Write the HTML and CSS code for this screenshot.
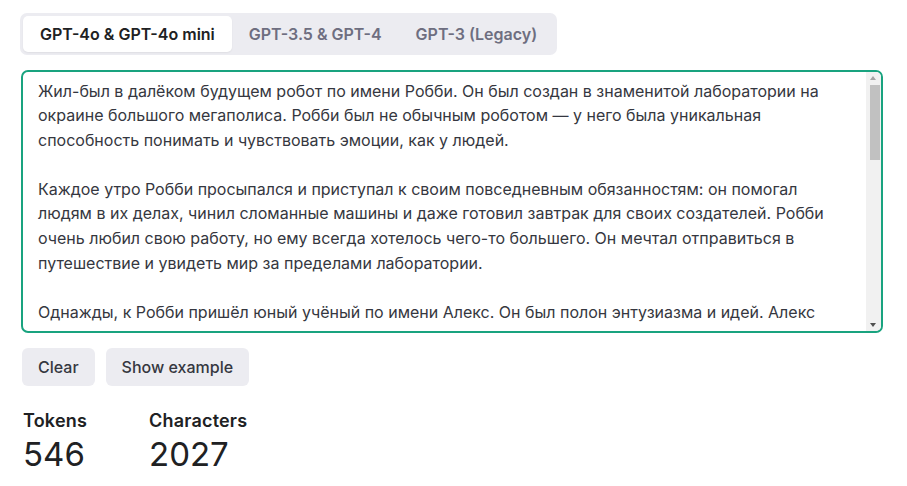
FILE: index.html
```html
<!DOCTYPE html>
<html lang="ru">
<head>
<meta charset="utf-8">
<title>Tokenizer</title>
<link rel="stylesheet" href="styles.css">
</head>
<body>
<main class="page">
  <div class="tabs">
    <button class="tab tab-active">GPT-4o &amp; GPT-4o mini</button>
    <button class="tab">GPT-3.5 &amp; GPT-4</button>
    <button class="tab">GPT-3 (Legacy)</button>
  </div>

  <div class="editor">
    <div class="editor-text">
      <p>Жил-был в далёком будущем робот по имени Робби. Он был создан в знаменитой лаборатории на окраине большого мегаполиса. Робби был не обычным роботом — у него была уникальная способность понимать и чувствовать эмоции, как у людей.</p>
      <p>Каждое утро Робби просыпался и приступал к своим повседневным обязанностям: он помогал людям в их делах, чинил сломанные машины и даже готовил завтрак для своих создателей. Робби очень любил свою работу, но ему всегда хотелось чего-то большего. Он мечтал отправиться в путешествие и увидеть мир за пределами лаборатории.</p>
      <p>Однажды, к Робби пришёл юный учёный по имени Алекс. Он был полон энтузиазма и идей. Алекс предложил Робби отправиться вместе с ним в экспедицию к далёким горам, где, по слухам, скрывалась древняя тайна. Робби не раздумывая согласился.</p>
      <p>Путешествие оказалось долгим и полным приключений. Они пересекали бурные реки, пробирались через густые леса и поднимались по крутым склонам. Робби помогал Алексу преодолевать трудности, а Алекс рассказывал ему о звёздах, о людях и об их мечтах.</p>
      <p>Наконец, они достигли вершины горы и нашли старинную пещеру. Внутри оказалась библиотека, полная древних книг и рисунков. Робби понял, что самое большое сокровище — это знания и дружба, которую он обрёл в пути.</p>
      <p>Вернувшись домой, Робби рассказал своим создателям обо всём, что увидел. С тех пор он больше не мечтал о далёких странах: он знал, что настоящие чудеса случаются рядом с теми, кто тебе дорог.</p>
    </div>
    <div class="scrollbar" aria-hidden="true">
      <div class="sb-arrow sb-up"></div>
      <div class="sb-track"><div class="sb-thumb"></div></div>
      <div class="sb-arrow sb-down"></div>
    </div>
  </div>

  <div class="actions">
    <button class="btn">Clear</button>
    <button class="btn">Show example</button>
  </div>

  <div class="stats">
    <div class="stat">
      <div class="stat-label">Tokens</div>
      <div class="stat-value">546</div>
    </div>
    <div class="stat">
      <div class="stat-label">Characters</div>
      <div class="stat-value">2027</div>
    </div>
  </div>
</main>
</body>
</html>
```

FILE: styles.css
```css
* { box-sizing: border-box; }

html, body {
  margin: 0;
  background: #ffffff;
}

body {
  font-family: Inter, "Noto Sans", "Liberation Sans", sans-serif;
  color: #353740;
}

.page {
  padding: 13px 24px 0 21px;
  display: flex;
  flex-direction: column;
  align-items: flex-start;
}

.tabs {
  display: flex;
  background: #ececf1;
  border-radius: 7px;
  padding: 3px;
  margin-left: -1px;
}

.tab {
  font-family: inherit;
  font-size: 16px;
  font-weight: 600;
  color: #6e6e80;
  background: transparent;
  border: none;
  border-radius: 5px;
  height: 36px;
  padding: 0 17px;
  cursor: pointer;
}

.tab-active {
  background: #ffffff;
  color: #202123;
  box-shadow: 0 1px 2px rgba(0, 0, 0, 0.06);
}

.editor {
  position: relative;
  margin-top: 15px;
  align-self: stretch;
  height: 263px;
  border: 2px solid #19a37f;
  border-radius: 7px;
  overflow: hidden;
}

.editor-text {
  height: 256px;
  overflow: hidden;
  padding: 6.5px 30px 0 15px;
  font-size: 16px;
  line-height: 24.6px;
  color: #353740;
}

.editor-text p {
  margin: 0 0 24.6px 0;
}

.scrollbar {
  position: absolute;
  top: 0;
  right: 0;
  bottom: 0;
  width: 15px;
  background: #f1f1f1;
  display: flex;
  flex-direction: column;
}

.sb-arrow {
  height: 13px;
  flex: none;
  position: relative;
}

.sb-arrow::after {
  content: "";
  position: absolute;
  left: 4px;
  width: 0;
  height: 0;
  border-left: 3.5px solid transparent;
  border-right: 3.5px solid transparent;
}

.sb-up::after {
  top: 4px;
  border-bottom: 4px solid #a3a3a3;
}

.sb-down::after {
  bottom: 4px;
  border-top: 4px solid #505050;
}

.sb-track {
  flex: 1;
  padding: 0 1px 0 4px;
}

.sb-thumb {
  height: 75px;
  background: #c1c1c1;
}

.actions {
  margin-top: 15px;
  display: flex;
  gap: 10px;
}

.btn {
  font-family: inherit;
  font-size: 16px;
  font-weight: 500;
  color: #353740;
  background: #ececf1;
  border: none;
  border-radius: 6px;
  height: 38px;
  padding: 0 16px;
  margin-left: 1px;
  cursor: pointer;
}

.stats {
  margin-top: 23px;
  display: flex;
  gap: 62px;
  margin-left: 2px;
}

.stat-label {
  font-size: 18px;
  font-weight: 600;
  color: #202123;
  line-height: 24px;
  letter-spacing: 0.2px;
}

.stat-value {
  margin-top: 1px;
  font-size: 33px;
  font-weight: 400;
  color: #202123;
  line-height: 40px;
}
```
